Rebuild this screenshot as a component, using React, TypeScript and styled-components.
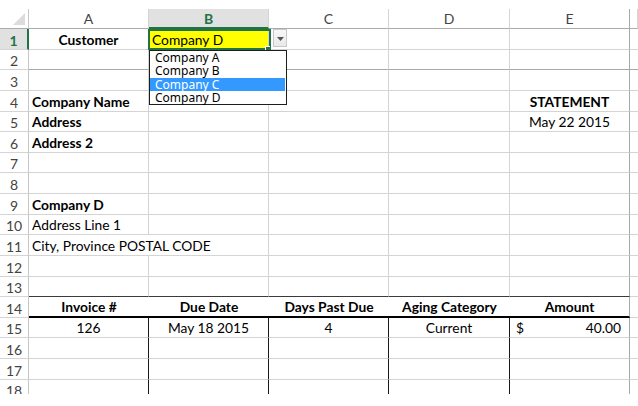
import React from "react";
import styled, { createGlobalStyle } from "styled-components";

const GRID = "#d4d4d4";
const GREEN = "#217346";

type Line = "grid" | "page" | "dark" | "thick" | "black" | "none";
type Align = "left" | "center" | "right" | "between";

const lines: Record<Line, string> = {
  grid: `1px solid ${GRID}`,
  page: "1px solid #a9a9a9",
  dark: "1px solid #3a3a3a",
  thick: "2px solid #000",
  black: "1px solid #1a1a1a",
  none: "0",
};

const justify: Record<Align, string> = {
  left: "flex-start",
  center: "center",
  right: "flex-end",
  between: "space-between",
};

const GlobalStyle = createGlobalStyle`
  html, body { margin: 0; padding: 0; background: #fff; overflow: hidden; }
  body { font-family: Lato, "Liberation Sans", sans-serif; }
`;

const Page = styled.div`
  width: 638px;
  height: 406px;
  padding-top: 9px;
  box-sizing: border-box;
`;

const Sheet = styled.div`
  position: relative;
  display: grid;
  grid-template-columns: 29px 120px 120px 120px 121px 120px 1fr;
  grid-template-rows: 20px repeat(18, 20.625px);
  height: 385px;
  overflow: hidden;
`;

const Corner = styled.div`
  box-sizing: border-box;
  border-right: 1px solid #c6c6c6;
  border-bottom: 1px solid #ababab;
  display: flex;
  align-items: flex-end;
  justify-content: flex-end;
  padding: 0 3px 3px 0;
`;

const ColHead = styled.div<{ $active?: boolean; $right?: Line }>`
  box-sizing: border-box;
  display: flex;
  align-items: center;
  justify-content: center;
  font-size: 14px;
  color: ${(p) => (p.$active ? GREEN : "#444")};
  font-weight: ${(p) => (p.$active ? 700 : 400)};
  background: ${(p) => (p.$active ? "#e1e1e1" : "#fff")};
  border-right: ${(p) => lines[p.$right || "grid"]};
  border-bottom: ${(p) => (p.$active ? `2px solid ${GREEN}` : "1px solid #ababab")};
`;

const RowHead = styled.div<{ $active?: boolean }>`
  box-sizing: border-box;
  display: flex;
  align-items: flex-end;
  justify-content: center;
  font-size: 14px;
  color: ${(p) => (p.$active ? GREEN : "#444")};
  font-weight: ${(p) => (p.$active ? 700 : 400)};
  background: ${(p) => (p.$active ? "#e1e1e1" : "#fff")};
  border-right: ${(p) => (p.$active ? `2px solid ${GREEN}` : "1px solid #c6c6c6")};
  border-bottom: 1px solid ${GRID};
`;

const Cell = styled.div<{
  $bold?: boolean;
  $align?: Align;
  $bg?: string;
  $right?: Line;
  $bottom?: Line;
}>`
  box-sizing: border-box;
  min-width: 0;
  display: flex;
  align-items: flex-end;
  justify-content: ${(p) => justify[p.$align || "left"]};
  padding: ${(p) => (p.$align === "between" ? "0 8px 1px 6px" : "0 3px 1px")};
  font-size: 13.8px;
  font-weight: ${(p) => (p.$bold ? 700 : 400)};
  color: #000;
  white-space: nowrap;
  background: ${(p) => p.$bg || "transparent"};
  border-right: ${(p) => lines[p.$right || "grid"]};
  border-bottom: ${(p) => lines[p.$bottom || "grid"]};
`;

const SelectionBox = styled.div`
  position: absolute;
  left: 148px;
  top: 20px;
  width: 123px;
  height: 21px;
  box-sizing: border-box;
  border: 2px solid ${GREEN};
`;

const FillHandle = styled.div`
  position: absolute;
  left: 266px;
  top: 38px;
  width: 5px;
  height: 5px;
  background: ${GREEN};
  box-shadow: -1px -1px 0 #fff;
`;

const DropButton = styled.div`
  position: absolute;
  left: 273px;
  top: 20px;
  width: 14px;
  height: 18px;
  box-sizing: border-box;
  border: 1px solid #c8c8c8;
  background: linear-gradient(#f8f8f8, #e9e9e9);
  display: flex;
  align-items: center;
  justify-content: center;
  padding-top: 2px;
`;

const ListBox = styled.div`
  position: absolute;
  left: 149px;
  top: 41px;
  width: 138px;
  height: 55px;
  box-sizing: border-box;
  border: 1px solid #1e1e1e;
  background: #fff;
  display: flex;
  flex-direction: column;
  padding-right: 1px;
  z-index: 3;
`;

const ListItem = styled.div<{ $hl?: boolean }>`
  height: 13.25px;
  display: flex;
  align-items: center;
  padding-left: 5px;
  font-family: "Noto Sans", "Open Sans", sans-serif;
  font-size: 12px;
  line-height: 13px;
  background: ${(p) => (p.$hl ? "#3399ff" : "transparent")};
  color: ${(p) => (p.$hl ? "#fff" : "#000")};
`;

interface CellSpec {
  text?: React.ReactNode;
  bold?: boolean;
  align?: Align;
  bg?: string;
  right?: Line;
  bottom?: Line;
}

const blank = (): CellSpec[] => [{}, {}, {}, {}, {}];

const rows: CellSpec[][] = Array.from({ length: 18 }, blank);

rows[0][0] = { text: "Customer", bold: true, align: "center" };
rows[0][1] = { text: "Company D", bg: "#ffff00" };
rows[1] = rows[1].map(() => ({ bottom: "page" as Line }));
rows[3][0] = { text: "Company Name", bold: true };
rows[3][4] = { text: "STATEMENT", bold: true, align: "center" };
rows[4][0] = { text: "Address", bold: true };
rows[4][4] = { text: "May 22 2015", align: "center" };
rows[5][0] = { text: "Address 2", bold: true };
rows[8][0] = { text: "Company D", bold: true };
rows[9][0] = { text: "Address Line 1" };
rows[10][0] = { text: "City, Province POSTAL CODE", right: "none" };
rows[12] = rows[12].map(() => ({ bottom: "dark" as Line }));
rows[13] = ["Invoice #", "Due Date", "Days Past Due", "Aging Category", "Amount"].map(
  (t) => ({ text: t, bold: true, align: "center" as Align, right: "none" as Line, bottom: "thick" as Line })
);
rows[14] = [
  { text: "126", align: "center" },
  { text: "May 18 2015", align: "center" },
  { text: "4", align: "center" },
  { text: "Current", align: "center" },
  {
    text: (
      <>
        <span>$</span>
        <span>40.00</span>
      </>
    ),
    align: "between",
  },
];
for (let r = 14; r < 18; r++) {
  for (let c = 0; c < 4; c++) rows[r][c] = { ...rows[r][c], right: "black" };
}

const columns = ["A", "B", "C", "D", "E"];
const companies = ["Company A", "Company B", "Company C", "Company D"];

export default function App() {
  return (
    <>
      <GlobalStyle />
      <Page>
        <Sheet>
          <Corner>
            <svg width="12" height="12" viewBox="0 0 12 12">
              <polygon points="12,0 12,12 0,12" fill="#dcdcdc" />
            </svg>
          </Corner>
          {columns.map((c) => (
            <ColHead key={c} $active={c === "B"} $right={c === "E" ? "page" : "grid"}>
              {c}
            </ColHead>
          ))}
          <ColHead />

          {rows.map((cells, r) => (
            <React.Fragment key={r}>
              <RowHead $active={r === 0}>{r + 1}</RowHead>
              {cells.map((cell, c) => (
                <Cell
                  key={c}
                  $bold={cell.bold}
                  $align={cell.align}
                  $bg={cell.bg}
                  $right={c === 4 ? "page" : cell.right}
                  $bottom={cell.bottom}
                >
                  {cell.text}
                </Cell>
              ))}
              <Cell $right="none" $bottom={r === 1 ? "page" : "grid"} />
            </React.Fragment>
          ))}

          <SelectionBox />
          <FillHandle />
          <DropButton>
            <svg width="7" height="4" viewBox="0 0 7 4">
              <polygon points="0,0 7,0 3.5,4" fill="#555" />
            </svg>
          </DropButton>
          <ListBox>
            {companies.map((name) => (
              <ListItem key={name} $hl={name === "Company C"}>
                {name}
              </ListItem>
            ))}
          </ListBox>
        </Sheet>
      </Page>
    </>
  );
}
